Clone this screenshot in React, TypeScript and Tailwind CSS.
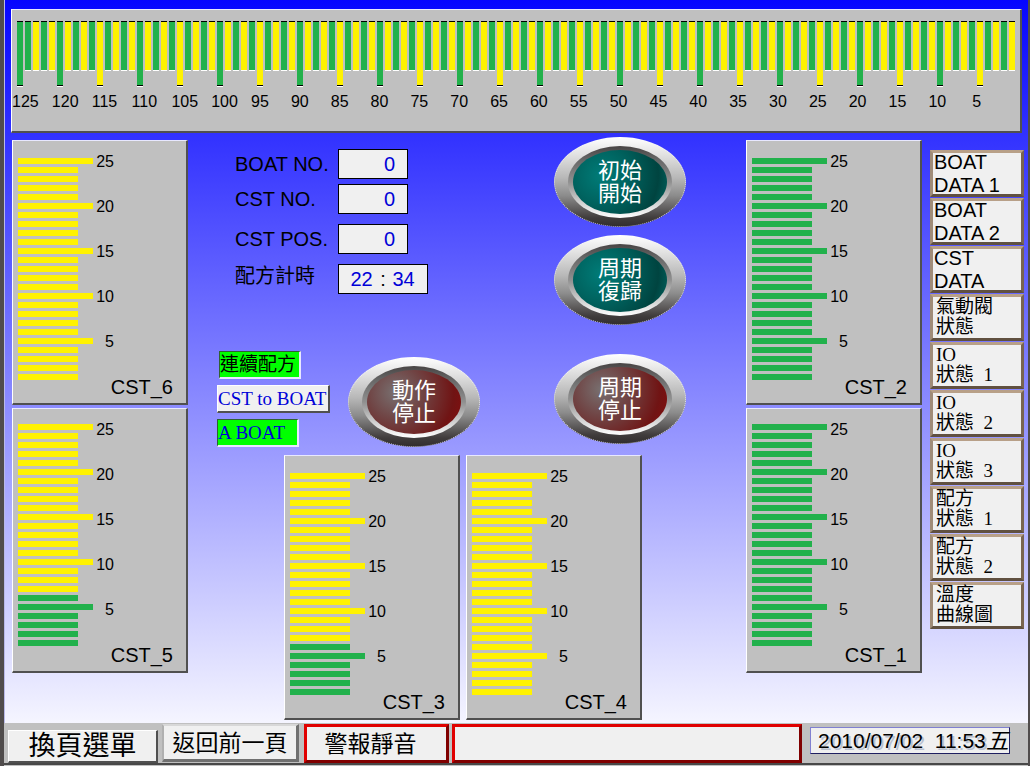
import type { ReactNode } from "react"
import { clsx } from "clsx"

const SLOTS = Array.from({ length: 25 }, (_, i) => 25 - i)
const BOAT_GROUPS = Array.from({ length: 25 }, (_, i) => 125 - i * 5)

const NAV_ITEMS = [
  { lines: ["BOAT", "DATA 1"], latin: true },
  { lines: ["BOAT", "DATA 2"], latin: true },
  { lines: ["CST", "DATA"], latin: true },
  { lines: ["氣動閥", "狀態"] },
  { lines: ["IO", "狀態  1"] },
  { lines: ["IO", "狀態  2"] },
  { lines: ["IO", "狀態  3"] },
  { lines: ["配方", "狀態  1"] },
  { lines: ["配方", "狀態  2"] },
  { lines: ["溫度", "曲線圖"] },
]

export default function App() {
  return (
    <div className="min-h-screen border-l-4 border-r-2 border-[#504c4c] bg-[#c0c0c0] font-['Liberation_Sans','Noto_Sans_CJK_TC',sans-serif] text-black">
      <main className="border-l border-[#b8b8e8] bg-[linear-gradient(180deg,#0505ff,#f5f5ff)] pt-[9px] pr-1 pb-[3px] pl-[6px]">
        <BoatPanel />
        <div className="mt-1 flex pl-px">
          <div className="flex flex-col gap-[3px] pt-[3px]">
            <CassettePanel name="CST_6" green={0} />
            <CassettePanel name="CST_5" green={6} raised />
          </div>

          <div className="flex flex-1 justify-center pr-[31px]">
            <div>
              <div className="flex justify-between">
                <div>
                  <ProcessForm />
                  <div className="mt-[57px] flex items-end gap-[18px]">
                    <div className="flex w-[113px] flex-col items-start gap-[6px]">
                      <Tag className="ml-[2px] w-[82px] border-t-[#306030] border-l-[#306030] border-r-[#e8e8ff] border-b-[#e8e8ff] bg-[#00ff00] text-black">
                        連續配方
                      </Tag>
                      <Tag className="w-full border-t-white border-l-white border-r-[#505050] border-b-[#505050] bg-[#f0f0f0] text-[#0000d8]">
                        CST to BOAT
                      </Tag>
                      <Tag className="w-[82px] border-t-[#306030] border-l-[#306030] border-r-[#e8e8ff] border-b-[#e8e8ff] bg-[#00ff00] text-[#0000d8]">
                        A BOAT
                      </Tag>
                    </div>
                    <OvalButton tone="red" lines={["動作", "停止"]} />
                  </div>
                </div>
                <div className="ml-[74px] flex flex-col gap-2">
                  <OvalButton tone="teal" lines={["初始", "開始"]} />
                  <OvalButton tone="teal" lines={["周期", "復歸"]} />
                  <div className="mt-[21px]">
                    <OvalButton tone="red" lines={["周期", "停止"]} />
                  </div>
                </div>
              </div>
              <div className="mt-2 ml-[67px] flex gap-[6px]">
                <CassettePanel name="CST_3" green={6} />
                <CassettePanel name="CST_4" green={0} />
              </div>
            </div>
          </div>

          <div className="flex flex-col gap-[3px] pt-[3px]">
            <CassettePanel name="CST_2" green={25} />
            <CassettePanel name="CST_1" green={25} raised />
          </div>

          <nav className="ml-2 flex w-[94px] flex-col gap-px pt-[13px]">
            {NAV_ITEMS.map((item) => (
              <button
                key={item.lines.join("")}
                className={clsx(
                  "flex h-[47px] flex-col border-3 border-t-[#b8a088] border-l-[#a08c78] border-r-[#786450] border-b-[#605040] bg-[#f0f0f0] text-left whitespace-pre",
                  item.latin
                    ? "justify-center pl-px text-xl leading-[23px]"
                    : "justify-start pl-[3px] font-['Liberation_Serif','Noto_Sans_CJK_TC',serif] text-[19px] leading-5",
                )}
              >
                {item.lines.map((line) => (
                  <span key={line}>{line}</span>
                ))}
              </button>
            ))}
          </nav>
        </div>
      </main>
      <Footer />
    </div>
  )
}

function BoatPanel() {
  return (
    <section className="mr-[2px] border border-r-2 border-b-2 border-t-[#e8e8ff] border-l-white border-r-[#505050] border-b-[#505050] bg-[#c0c0c0] pt-[11px] pb-5">
      <div className="flex h-[66px] pr-[3px] pl-[5px]">
        {BOAT_GROUPS.map((group) => (
          <div key={group} className="flex flex-1 items-start gap-0.5 pr-0.5">
            {[0, 1, 2, 3, 4].map((i) => {
              const slot = group - i
              return (
                <div
                  key={slot}
                  className={clsx(
                    "flex-1 border-t border-b border-t-black border-b-white",
                    i === 0 ? "h-[66px]" : "h-[50px]",
                    slot % 2 === 0 || slot === 125 ? "bg-[#22b14c]" : "bg-[#fff200]",
                  )}
                >
                  {i === 0 && <div className="h-full border-b border-black" />}
                </div>
              )
            })}
          </div>
        ))}
      </div>
      <div className="mt-[6px] flex pr-2 text-base leading-[18px]">
        {BOAT_GROUPS.map((group) => (
          <span key={group} className={clsx("w-0 flex-1", group === 5 && "pl-1")}>
            {group}
          </span>
        ))}
      </div>
    </section>
  )
}

function CassettePanel({ name, green, raised }: { name: string; green: number; raised?: boolean }) {
  return (
    <section className="flex h-[265px] w-44 border border-r-2 border-b-2 border-t-[#e8e8ff] border-l-white border-r-[#505050] border-b-[#505050] bg-[#c0c0c0] pl-[5px]">
      <div className={clsx("flex w-[75px] flex-col gap-[3px]", raised ? "pt-[15px]" : "pt-[17px]")}>
        {SLOTS.map((slot) => (
          <div
            key={slot}
            className={clsx(
              "h-[6px]",
              slot % 5 === 0 ? "w-[75px]" : "w-[60px]",
              slot <= green ? "bg-[#22b14c]" : "bg-[#fff200]",
            )}
          />
        ))}
      </div>
      <div className="flex-1 pt-3">
        {[25, 20, 15, 10, 5].map((n) => (
          <div key={n} className="h-[45px] w-[21px] text-right text-base leading-[18px]">
            {n}
          </div>
        ))}
        <h2 className="pr-[13px] text-right text-xl leading-[18px]">{name}</h2>
      </div>
    </section>
  )
}

function ProcessForm() {
  return (
    <form className="flex flex-col gap-[10px] pt-3 pl-[18px]">
      <div className="flex flex-col gap-[5px]">
        <NumberField id="boat-no" label="BOAT NO." />
        <NumberField id="cst-no" label="CST NO." />
      </div>
      <NumberField id="cst-pos" label="CST POS." />
      <div className="flex">
        <label htmlFor="timer-min" className="w-[103px] text-xl leading-6">
          配方計時
        </label>
        <div className="flex h-[30px] w-[90px] items-center justify-center border border-black bg-[#f0f0f0] text-xl">
          <input id="timer-min" defaultValue="22" className="w-[23px] text-[#0000d8] outline-none" />
          <span className="w-[19px] text-center">:</span>
          <input aria-label="sec" defaultValue="34" className="w-[23px] text-[#0000d8] outline-none" />
        </div>
      </div>
    </form>
  )
}

function NumberField({ id, label }: { id: string; label: string }) {
  return (
    <div className="flex items-center">
      <label htmlFor={id} className="w-[103px] text-xl whitespace-nowrap">
        {label}
      </label>
      <input
        id={id}
        defaultValue="0"
        className="h-[30px] w-[70px] border border-black bg-[#f0f0f0] pr-3 text-right text-xl text-[#0000d8] outline-none"
      />
    </div>
  )
}

function Tag({ className, children }: { className: string; children: ReactNode }) {
  return (
    <button
      className={clsx(
        "h-7 border border-r-2 border-b-2 text-left font-['Liberation_Serif','Noto_Sans_CJK_TC',serif] text-[19px] leading-6 whitespace-nowrap",
        className,
      )}
    >
      {children}
    </button>
  )
}

function OvalButton({ tone, lines }: { tone: "teal" | "red"; lines: string[] }) {
  return (
    <button className="flex h-[90px] w-[132px] items-center justify-center rounded-[50%] border border-dotted border-white/70 bg-[linear-gradient(180deg,#ffffff_0%,#e4e4e4_18%,#b8b8b8_45%,#8c8c8c_65%,#403c3c_90%,#302c2c_100%)] bg-origin-border">
      <span className="flex h-[72px] w-[104px] items-center justify-center rounded-[50%] bg-[linear-gradient(180deg,#484444_0%,#686868_20%,#909090_50%,#d0d0d0_78%,#ffffff_100%)]">
        <span
          className={clsx(
            "flex h-[64px] w-[94px] flex-col items-center justify-center rounded-[50%] text-[22px] leading-[23px] text-white",
            tone === "teal"
              ? "bg-[radial-gradient(circle_at_30%_40%,#007c78_0%,#006460_35%,#004440_75%,#006c68_100%)]"
              : "bg-[radial-gradient(circle_at_30%_35%,#787070_0%,#704444_35%,#701414_75%,#880c0c_100%)]",
          )}
        >
          {lines.map((line) => (
            <span key={line}>{line}</span>
          ))}
        </span>
      </span>
    </button>
  )
}

function Footer() {
  return (
    <footer className="flex items-start border-b-2 border-[#484848] bg-[#c0c0c0] pt-px pr-[18px] pl-1">
      <button className="mt-[6px] h-[33px] w-[150px] border border-r-2 border-b-2 border-t-white border-l-white border-r-[#505050] border-b-[#505050] bg-[#f0f0f0] text-[27px] leading-[30px]">
        換頁選單
      </button>
      <button className="ml-1 h-[38px] w-[137px] border-2 border-r-3 border-b-3 border-t-[#d8d8d8] border-l-[#b0b0b0] border-r-[#707070] border-b-[#707070] bg-[#f0f0f0] text-[23px] leading-8">
        返回前一頁
      </button>
      <button className="ml-[5px] h-[39px] w-[145px] border-3 border-t-[#e00000] border-l-[#e00000] border-r-[#800000] border-b-[#800000] bg-[#f0f0f0] pr-3 text-[23px] leading-8">
        警報靜音
      </button>
      <div className="ml-[3px] h-[39px] flex-1 border-3 border-t-[#e00000] border-l-[#e00000] border-r-[#800000] border-b-[#800000] bg-[#f0f0f0]" />
      <div className="mt-[3px] ml-2 flex h-[27px] w-[200px] border border-t-[#8080d0] border-l-[#8080d0] border-r-[#202060] border-b-[#202060] bg-[#f0f0f0] pl-[7px] text-[21px] leading-[26px] whitespace-pre">
        <time className="[text-shadow:2px_2px_0_#b8c0d0]">2010/07/02  11:53</time>
        <span className="text-[23px] italic">五</span>
      </div>
    </footer>
  )
}
